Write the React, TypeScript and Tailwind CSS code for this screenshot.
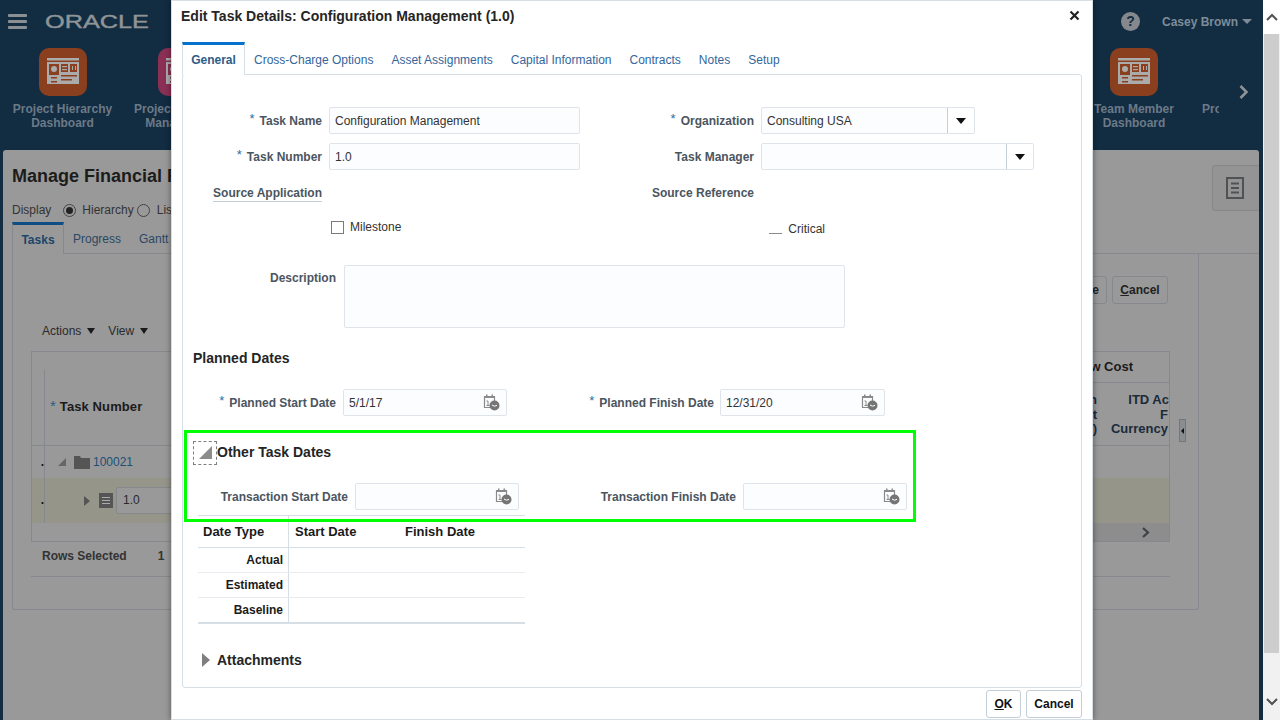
import React from "react";

const Tile = ({ color }: { color: string }) => (
  <svg width="48" height="48" viewBox="0 0 48 48" className="block">
    <rect width="48" height="48" rx="10" fill={color} />
    <rect x="8" y="10" width="32" height="2.5" fill="#ababab" />
    <rect x="8" y="14" width="32" height="22" fill="#ababab" />
    <rect x="10" y="16" width="10" height="11" fill={color} />
    <circle cx="15" cy="21" r="3" fill="#ababab" />
    <rect x="22" y="16" width="7" height="8" fill={color} />
    <rect x="23" y="18" width="5" height="1.2" fill="#ababab" />
    <rect x="23" y="21" width="5" height="1.2" fill="#ababab" />
    <rect x="31" y="16" width="7" height="8" fill={color} />
    <rect x="33" y="18" width="1" height="4" fill="#ababab" />
    <rect x="36" y="18" width="1" height="4" fill="#ababab" />
    <rect x="12" y="29" width="6" height="1.5" fill={color} />
    <rect x="12" y="33" width="6" height="1.5" fill={color} />
    <rect x="22" y="27" width="16" height="1.5" fill={color} />
    <rect x="22" y="31" width="11" height="1.5" fill={color} />
  </svg>
);

const AppItem = ({ l1, l2, color, w }: { l1: string; l2: string; color: string; w: string }) => (
  <div className={`${w} flex flex-col items-center`}>
    <Tile color={color} />
    <div className="mt-[6px] text-[12px] leading-[14px] font-bold text-[#6b7a87] text-center whitespace-nowrap">
      {l1}
      <br />
      {l2}
    </div>
  </div>
);

const Cal = () => (
  <svg width="17" height="17" viewBox="0 0 17 17" className="block">
    <path d="M1.500 2.500h10v6M1.500 2.500v11h6" fill="none" stroke="#8a8a8a" strokeWidth="1.2" />
    <rect x="1" y="2" width="11" height="2" fill="#8a8a8a" />
    <rect x="3" y="0.5" width="1.500" height="2.500" fill="#8a8a8a" />
    <rect x="8.500" y="0.5" width="1.500" height="2.500" fill="#8a8a8a" />
    <path d="M3.500 7h1.500v4.500M3.500 11.500h3" fill="none" stroke="#8a8a8a" strokeWidth="1" />
    <circle cx="11.500" cy="11.500" r="5" fill="#757575" />
    <path d="M9 11l2.500 1.200 2.500-.8" fill="none" stroke="#fff" strokeWidth="1" />
  </svg>
);

const Req = () => <span className="text-[#2f6ea5] mr-[5px] relative top-[-2px] font-normal text-[13px]">*</span>;

const Label = ({ w, req, children }: { w: string; req?: boolean; children: React.ReactNode }) => (
  <div className={`${w} shrink-0 text-right text-[12px] font-bold text-[#4b5560] whitespace-nowrap`}>
    {req && <Req />}
    {children}
  </div>
);

const box = "h-[27px] border border-[#dfe4ea] rounded-[2px] bg-[#fcfdfe] flex items-center text-[12px] text-[#333333] shrink-0";

const Drop = ({ w, value }: { w: string; value?: string }) => (
  <div className={`${box} ${w} justify-between`}>
    <span className="pl-[5px]">{value}</span>
    <span className="w-[27px] h-full border-l border-[#c4ced7] flex items-center justify-center bg-white rounded-r-[2px]">
      <span className="w-0 h-0 border-l-[5px] border-r-[5px] border-t-[6px] border-l-transparent border-r-transparent border-t-[#111111]" />
    </span>
  </div>
);

const DateBox = ({ value, w = "w-[164px]" }: { value?: string; w?: string }) => (
  <div className={`${box} ${w} justify-between pr-[6px]`}>
    <span className="pl-[5px]">{value}</span>
    <Cal />
  </div>
);

const TableRow = ({ label, last }: { label: string; last?: boolean }) => (
  <div className={`flex h-[25px] border-b ${last ? "border-b-2 border-[#d6dfe6] h-[26px]" : "border-[#e8ecf0]"}`}>
    <div className="w-[91px] pr-[5px] text-right font-bold text-[12px] leading-[24px] text-[#1b1b1b] border-r border-[#d6dfe6]">
      {label}
    </div>
    <div className="flex-1" />
  </div>
);

const dialogTabs = ["Cross-Charge Options", "Asset Assignments", "Capital Information", "Contracts", "Notes", "Setup"];

export default function App() {
  return (
    <div className="relative w-[1280px] h-[720px] overflow-hidden flex bg-white font-['Liberation_Sans',Arial,sans-serif]">
      {/* Page behind the dialog, already dimmed */}
      <div className="w-[1263px] h-full bg-[#122c42] flex flex-col shrink-0">
        <div className="h-[48px] flex items-center justify-between shrink-0 pb-[5px]">
          <div className="flex items-center pl-[8px]">
            <div className="w-[19px] flex flex-col gap-[3px]">
              <div className="h-[3px] bg-[#8a8f94] rounded-[1px]" />
              <div className="h-[3px] bg-[#8a8f94] rounded-[1px]" />
              <div className="h-[3px] bg-[#8a8f94] rounded-[1px]" />
            </div>
            <svg width="106" height="18" viewBox="0 0 106 18" className="ml-[18px] block">
              <text x="0" y="15" fontSize="18" fontFamily="Liberation Sans" fill="#8f9497" stroke="#8f9497" strokeWidth="0.4" textLength="104" lengthAdjust="spacingAndGlyphs">
                ORACLE
              </text>
            </svg>
          </div>
          <div className="flex items-center pr-[11px]">
            <div className="w-[19px] h-[19px] rounded-full bg-[#85898e] text-[#122c42] text-[14px] font-bold flex items-center justify-center">?</div>
            <span className="ml-[22px] text-[12px] font-bold text-[#7e8c98]">Casey Brown</span>
            <span className="ml-[4px] w-0 h-0 border-l-[5px] border-r-[5px] border-t-[5px] border-l-transparent border-r-transparent border-t-[#7e8c98]" />
          </div>
        </div>
        <div className="h-[102px] flex justify-between shrink-0 overflow-hidden">
          <div className="flex pl-[3px]">
            <AppItem w="w-[119px]" l1="Project Hierarchy" l2="Dashboard" color="#8a3f1f" />
            <AppItem w="w-[120px]" l1="Project Financial" l2="Management" color="#8b2f55" />
          </div>
          <div className="flex">
            <AppItem w="w-[120px]" l1="Team Member" l2="Dashboard" color="#8a3f1f" />
            <div className="w-[17px] ml-[8px] overflow-hidden">
              <div className="mt-[54px] text-[12px] leading-[14px] font-bold text-[#6b7a87] whitespace-nowrap">Project</div>
            </div>
            <div className="w-[44px] pl-[19px] pt-[36px]">
              <svg width="12" height="16" viewBox="0 0 12 16" className="block">
                <path d="M2.500 2l6 6-6 6" fill="none" stroke="#8d9296" strokeWidth="2.6" />
              </svg>
            </div>
          </div>
        </div>
        {/* Main panel */}
        <div className="ml-[3px] mr-[4px] h-[570px] bg-[#999999] rounded-t-[3px] pl-[9px] flex flex-col shrink-0">
          <div className="flex justify-between">
            <div className="pt-[15px] text-[18px] leading-[22px] font-bold text-[#1c1c1c] whitespace-nowrap">Manage Financial Project Plan</div>
            <div className="mt-[15px] w-[47px] h-[46px] bg-[#949494] border border-r-0 border-[#85888b] rounded-l-[4px] flex items-center justify-center pr-[2px]">
              <svg width="18" height="22" viewBox="0 0 18 22" className="block">
                <rect x="1" y="1" width="16" height="20" fill="none" stroke="#4f5254" strokeWidth="2" />
                <path d="M5 6.500h8M5 11h8M5 15.500h8" stroke="#4f5254" strokeWidth="2" />
              </svg>
            </div>
          </div>
          <div className="flex items-center -mt-[9px] h-[16px] text-[12px] text-[#333333]">
            <span>Display</span>
            <span className="ml-[12px] w-[13px] h-[13px] rounded-full border border-[#444444] flex items-center justify-center">
              <span className="w-[7px] h-[7px] rounded-full bg-[#222222]" />
            </span>
            <span className="ml-[6px]">Hierarchy</span>
            <span className="ml-[3px] w-[13px] h-[13px] rounded-full border border-[#444444]" />
            <span className="ml-[7px]">List</span>
          </div>
          <div className="flex mt-[4px] h-[32px] text-[12px]">
            <div className="w-[52px] border-t-[3px] border-[#0f4d85] border-r border-l border-r-[#85898d] border-l-[#85898d] flex items-center justify-center font-bold text-[#1b456b]">Tasks</div>
            <div className="pl-[9px] flex items-center text-[#2c4763] border-b border-[#85898d] pt-[3px]">Progress</div>
            <div className="pl-[18px] flex-1 flex items-center text-[#2c4763] border-b border-[#85898d] pt-[3px]">Gantt</div>
          </div>
          <div className="w-[1187px] h-[356px] border-l border-r border-b border-[#85898d] rounded-b-[3px] pl-[18px] relative">
            <div className="flex justify-end gap-[5px] pr-[30px] pt-[22px]">
              <div className="w-[58px] h-[28px] border border-[#85898d] rounded-[3px] flex items-center justify-end pr-[7px] text-[12px] font-bold text-[#222222]">Save</div>
              <div className="w-[56px] h-[28px] border border-[#85898d] rounded-[3px] flex items-center justify-center text-[12px] font-bold text-[#222222]">
                <span><span className="underline">C</span>ancel</span>
              </div>
            </div>
            <div className="flex items-center h-[16px] mt-[19px] pl-[11px] text-[12px] text-[#2a2a2a]">
              <span>Actions</span>
              <span className="ml-[6px] w-0 h-0 border-l-[4.5px] border-r-[4.5px] border-t-[6px] border-l-transparent border-r-transparent border-t-[#1a1a1a]" />
              <span className="ml-[13px]">View</span>
              <span className="ml-[6px] w-0 h-0 border-l-[4.5px] border-r-[4.5px] border-t-[6px] border-l-transparent border-r-transparent border-t-[#1a1a1a]" />
            </div>
            <div className="w-[1139px] h-[191px] mt-[12px] border border-[#85898d] flex flex-col">
              <div className="h-[94px] border-b border-[#85898d] flex justify-between shrink-0">
                <div className="flex">
                  <div className="w-[12px]" />
                  <div className="border-l border-[#85898d] mt-[18px] pt-[24px] pl-[5px] font-bold text-[#1b1b1b] h-[75px] whitespace-nowrap">
                    <span className="text-[#2a5c85] mr-[4px] font-normal text-[15px]">*</span>
                    <span className="text-[13px] tracking-[0.1px]">Task Number</span>
                  </div>
                </div>
                <div className="w-[110px] overflow-hidden">
                  <div className="h-[31px] border-b border-[#85898d] text-[13px] font-bold text-[#1b1b1b] leading-[30px] text-right pr-[36px] whitespace-nowrap">Raw Cost</div>
                  <div className="flex justify-between text-[13px] leading-[14.5px] pt-[10px] font-bold text-[#1b2b3a] text-right">
                    <div className="w-[38px]">
                      <div>n</div>
                      <div>t</div>
                      <div>)</div>
                    </div>
                    <div className="w-[65px] whitespace-nowrap">
                      <div>ITD Ac</div>
                      <div className="pr-px">F</div>
                      <div className="pr-[1px]">Currency</div>
                    </div>
                  </div>
                </div>
              </div>
              <div className="h-[32px] flex items-center shrink-0 text-[12px]">
                <span className="w-[13px] text-right pr-0 text-[#111111] border-r border-[#85898d] h-full pt-[7px] font-bold">.</span>
                <span className="ml-[13px] w-0 h-0 border-l-[8px] border-b-[8px] border-l-transparent border-b-[#666666]" />
                <svg width="16" height="14" viewBox="0 0 16 14" className="ml-[8px] block">
                  <path d="M0 1h6l1 2h9v11H0z" fill="#555555" />
                </svg>
                <span className="ml-[3px] text-[#1c4f78]">100021</span>
              </div>
              <div className="h-[45px] bg-[#95958a] flex items-center shrink-0 text-[12px]">
                <span className="w-[13px] text-right pr-0 text-[#111111] border-r border-[#85898d] h-full pt-[13px] font-bold">.</span>
                <span className="ml-[39px] w-0 h-0 border-y-[5px] border-l-[6px] border-y-transparent border-l-[#555555]" />
                <span className="ml-[9px] w-[14px] h-[15px] bg-[#555555] flex flex-col items-center justify-center gap-[2px]">
                  <span className="w-[8px] h-px bg-[#aaaaaa]" />
                  <span className="w-[8px] h-px bg-[#aaaaaa]" />
                  <span className="w-[8px] h-px bg-[#aaaaaa]" />
                </span>
                <span className="ml-[3px] w-[60px] h-[27px] border border-[#85898d] rounded-[2px] pl-[6px] leading-[25px] bg-[#999999] text-[#2a2a2a]">1.0</span>
              </div>
              <div className="flex-1 flex justify-end">
                <div className="w-[78px] bg-[#8d8d8d] pl-[50px] pt-[4px]">
                  <svg width="10" height="11" viewBox="0 0 10 11" className="block">
                    <path d="M2 1l5 4.500-5 4.500" fill="none" stroke="#3f4245" strokeWidth="2.2" />
                  </svg>
                </div>
              </div>
            </div>
            <div className="w-[1139px] h-[35px] border-b border-[#85898d] flex items-center pl-[11px] pb-[7px] text-[12px] font-bold text-[#333333]">
              <span>Rows Selected</span>
              <span className="ml-[31px]">1</span>
            </div>
            <div className="absolute left-[1166px] top-[165px] w-[7px] h-[23px] bg-[#8a8d90] border border-[#75787b] flex items-center justify-center">
              <span className="w-0 h-0 border-y-[3px] border-r-[3px] border-y-transparent border-r-[#111111]" />
            </div>
          </div>
        </div>
      </div>

      {/* Browser scrollbar */}
      <div className="w-[17px] h-full bg-[#f1f1f1] flex flex-col shrink-0">
        <div className="h-[34px] bg-white flex items-center justify-center">
          <svg width="12" height="8" viewBox="0 0 12 8" className="block"><path d="M1 7l5-5 5 5" fill="none" stroke="#505050" strokeWidth="2" /></svg>
        </div>
        <div className="h-[619px] bg-[#cdcdcd] mx-px" />
        <div className="flex-1 flex items-end justify-center pb-[14px]">
          <svg width="12" height="8" viewBox="0 0 12 8" className="block"><path d="M1 1l5 5 5-5" fill="none" stroke="#505050" strokeWidth="2" /></svg>
        </div>
      </div>

      {/* Dialog */}
      <div className="absolute left-[171px] top-0 w-[922px] h-[720px] bg-white border border-[#d6dfe6] shadow-[0_0_6px_rgba(0,0,0,0.45)] flex flex-col">
        <div className="h-[41px] shrink-0 flex items-start justify-between pl-[9px] pr-[12px] pt-[6px]">
          <span className="text-[14px] leading-[18px] font-bold text-[#252525]">Edit Task Details: Configuration Management (1.0)</span>
          <svg width="11" height="11" viewBox="0 0 11 11" className="block mt-[3px]">
            <path d="M1.500 1.500l8 8M9.500 1.500l-8 8" stroke="#222222" strokeWidth="2.2" />
          </svg>
        </div>
        <div className="ml-[10px] w-[900px] flex h-[32px] shrink-0 text-[12px] relative z-10">
          <div className="w-[63px] border-t-[3px] border-[#0572ce] border-l border-r border-l-[#d6dfe6] border-r-[#d6dfe6] bg-white h-[33px] flex items-center justify-center font-bold text-[#2e5c88]">General</div>
          {dialogTabs.map((t) => (
            <div key={t} className="px-[9px] pt-[3px] flex items-center text-[#33669c] whitespace-nowrap">{t}</div>
          ))}
        </div>
        <div className="ml-[10px] w-[900px] h-[614px] shrink-0 border border-[#d6dfe6] rounded-[3px] flex flex-col relative">
          <div className="flex items-center mt-[32px]">
            <Label w="w-[139px]" req>Task Name</Label>
            <div className={`${box} w-[251px] ml-[7px] pl-[5px]`}>Configuration Management</div>
            <Label w="w-[174px]" req>Organization</Label>
            <div className="ml-[7px]"><Drop w="w-[214px]" value="Consulting USA" /></div>
          </div>
          <div className="flex items-center mt-[9px]">
            <Label w="w-[139px]" req>Task Number</Label>
            <div className={`${box} w-[251px] ml-[7px] pl-[5px]`}>1.0</div>
            <Label w="w-[174px]">Task Manager</Label>
            <div className="ml-[7px]"><Drop w="w-[273px]" /></div>
          </div>
          <div className="flex items-center mt-[14px] h-[18px]">
            <div className="w-[139px] text-right text-[12px] font-bold text-[#4b5560] whitespace-nowrap">
              <span className="border-b border-[#c3cdd6] pb-[1px]">Source Application</span>
            </div>
            <Label w="w-[432px]">Source Reference</Label>
          </div>
          <div className="flex mt-[17px] h-[18px] text-[12px] text-[#333333]">
            <div className="ml-[148px] mt-[2px] w-[13px] h-[13px] border border-[#7a7a7a] bg-white" />
            <span className="ml-[6px] leading-[16px]">Milestone</span>
            <div className="ml-[368px] mt-[14px] w-[13px] h-px bg-[#8a8a8a]" />
            <span className="ml-[6px] mt-[2px] leading-[16px]">Critical</span>
          </div>
          <div className="flex mt-[28px]">
            <div className="w-[153px] pt-[4px] text-right text-[12px] font-bold text-[#4b5560]">Description</div>
            <div className="ml-[8px] w-[501px] h-[63px] border border-[#dfe4ea] rounded-[2px] bg-[#fcfdfe]" />
          </div>
          <div className="mt-[21px] ml-[10px] h-[18px] text-[14px] leading-[18px] font-bold text-[#252525]">Planned Dates</div>
          <div className="flex items-center mt-[22px]">
            <Label w="w-[153px]" req>Planned Start Date</Label>
            <div className="ml-[7px]"><DateBox value="5/1/17" /></div>
            <Label w="w-[207px]" req>Planned Finish Date</Label>
            <div className="ml-[6px]"><DateBox value="12/31/20" w="w-[165px]" /></div>
          </div>
          <div className="flex items-center mt-[25px] h-[23px]">
            <div className="ml-[10px] w-[24px] h-[24px] border border-dashed border-[#7f7f7f] flex items-center justify-center">
              <span className="w-0 h-0 border-l-[13px] border-b-[13px] border-l-transparent border-b-[#8c8c8c]" />
            </div>
            <span className="text-[14px] font-bold text-[#252525]">Other Task Dates</span>
          </div>
          <div className="flex items-center mt-[19px]">
            <Label w="w-[165px]">Transaction Start Date</Label>
            <div className="ml-[7px]"><DateBox /></div>
            <Label w="w-[217px]">Transaction Finish Date</Label>
            <div className="ml-[7px]"><DateBox /></div>
          </div>
          <div className="ml-[15px] mt-[5px] w-[327px] border-t border-[#d6dfe6]">
            <div className="flex h-[32px] border-b border-[#d6dfe6] text-[13px] font-bold text-[#1b1b1b] leading-[31px]">
              <div className="w-[91px] pl-[5px] border-r border-[#d6dfe6]">Date Type</div>
              <div className="w-[116px] pl-[6px]">Start Date</div>
              <div>Finish Date</div>
            </div>
            <TableRow label="Actual" />
            <TableRow label="Estimated" />
            <TableRow label="Baseline" last />
          </div>
          <div className="flex items-center mt-[27px] h-[18px] ml-[19px]">
            <span className="w-0 h-0 border-y-[7px] border-l-[8px] border-y-transparent border-l-[#7f7f7f]" />
            <span className="ml-[7px] text-[14px] font-bold text-[#252525]">Attachments</span>
          </div>
          {/* Annotation frame drawn over the form */}
          <div className="absolute left-[1px] top-[355px] w-[732px] h-[92px] border-[3px] border-[#00ff00] pointer-events-none" />
        </div>
        <div className="flex justify-end gap-[5px] mt-[2px] mr-[10px]">
          <div className="w-[35px] h-[28px] border border-[#c4ced7] rounded-[3px] flex items-center justify-center text-[12px] font-bold text-[#111111]">
            <span><span className="underline">O</span>K</span>
          </div>
          <div className="w-[56px] h-[28px] border border-[#c4ced7] rounded-[3px] flex items-center justify-center text-[12px] font-bold text-[#111111]">Cancel</div>
        </div>
      </div>
    </div>
  );
}
